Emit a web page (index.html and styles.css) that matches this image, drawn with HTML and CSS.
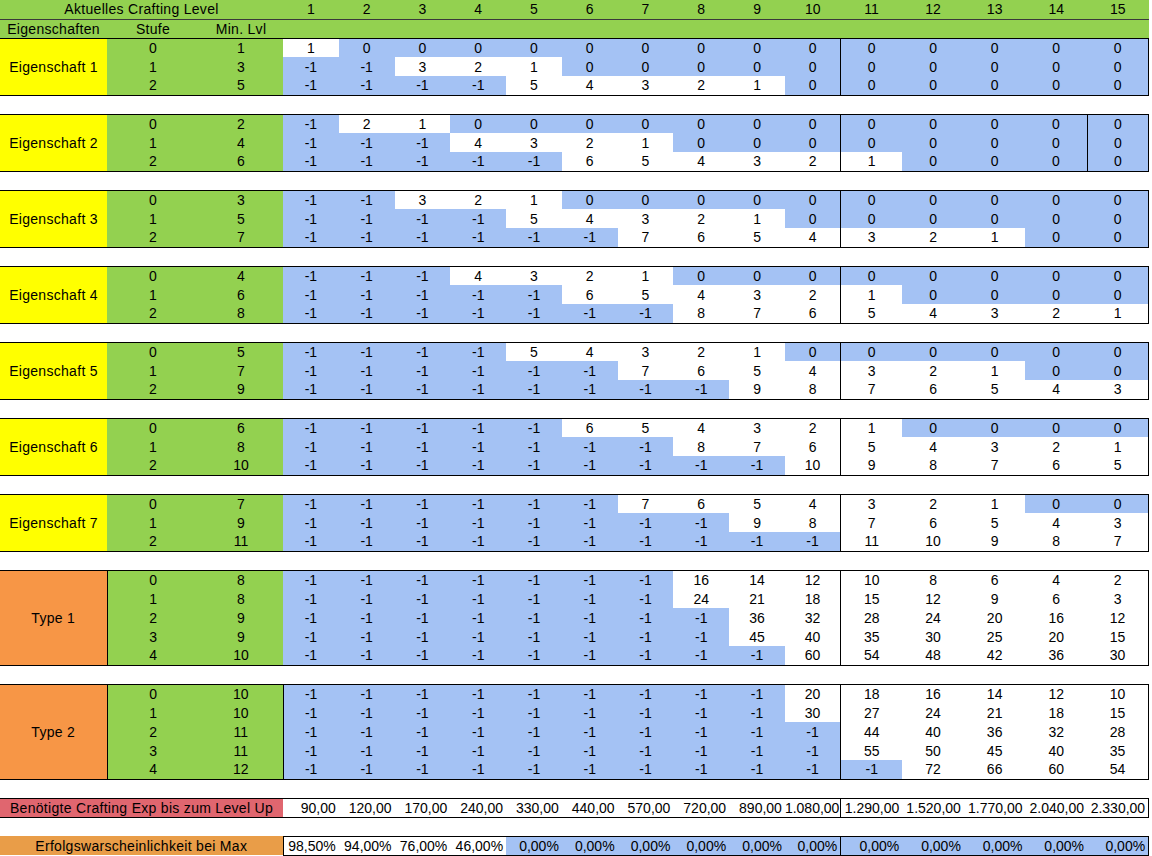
FILE: index.html
```html
<!DOCTYPE html>
<html lang="de">
<head>
<meta charset="utf-8">
<title>Crafting Level</title>
<link rel="stylesheet" href="styles.css">
</head>
<body>
<table class="sheet">
<colgroup>
<col class="ca"><col class="cb"><col class="cc">
<col class="cd"><col class="cd"><col class="cd"><col class="cd"><col class="cd"><col class="cd"><col class="cd"><col class="cd"><col class="cd"><col class="cd">
<col class="ce"><col class="ce"><col class="ce"><col class="ce"><col class="ce">
</colgroup>
<tbody class="head">
<tr class="h1"><td colspan="3" class="lbl">Aktuelles Crafting Level</td><td>1</td><td>2</td><td>3</td><td>4</td><td>5</td><td>6</td><td>7</td><td>8</td><td>9</td><td>10</td><td>11</td><td>12</td><td>13</td><td>14</td><td>15</td></tr>
<tr class="h2"><td class="lbl">Eigenschaften</td><td class="lbl">Stufe</td><td class="lbl">Min. Lvl</td><td></td><td></td><td></td><td></td><td></td><td></td><td></td><td></td><td></td><td></td><td></td><td></td><td></td><td></td><td></td></tr>
</tbody>

<tbody class="blk eig">
<tr><td rowspan="3" class="name">Eigenschaft 1</td><td class="g">0</td><td class="g">1</td><td>1</td><td class="b">0</td><td class="b">0</td><td class="b">0</td><td class="b">0</td><td class="b">0</td><td class="b">0</td><td class="b">0</td><td class="b">0</td><td class="b">0</td><td class="b">0</td><td class="b">0</td><td class="b">0</td><td class="b">0</td><td class="b">0</td></tr>
<tr><td class="g">1</td><td class="g">3</td><td class="b">-1</td><td class="b">-1</td><td>3</td><td>2</td><td>1</td><td class="b">0</td><td class="b">0</td><td class="b">0</td><td class="b">0</td><td class="b">0</td><td class="b">0</td><td class="b">0</td><td class="b">0</td><td class="b">0</td><td class="b">0</td></tr>
<tr><td class="g">2</td><td class="g">5</td><td class="b">-1</td><td class="b">-1</td><td class="b">-1</td><td class="b">-1</td><td>5</td><td>4</td><td>3</td><td>2</td><td>1</td><td class="b">0</td><td class="b">0</td><td class="b">0</td><td class="b">0</td><td class="b">0</td><td class="b">0</td></tr>
</tbody>
<tbody class="gap"><tr><td colspan="18"></td></tr></tbody>

<tbody class="blk eig e2">
<tr><td rowspan="3" class="name">Eigenschaft 2</td><td class="g">0</td><td class="g">2</td><td class="b">-1</td><td>2</td><td>1</td><td class="b">0</td><td class="b">0</td><td class="b">0</td><td class="b">0</td><td class="b">0</td><td class="b">0</td><td class="b">0</td><td class="b">0</td><td class="b">0</td><td class="b">0</td><td class="b">0</td><td class="b">0</td></tr>
<tr><td class="g">1</td><td class="g">4</td><td class="b">-1</td><td class="b">-1</td><td class="b">-1</td><td>4</td><td>3</td><td>2</td><td>1</td><td class="b">0</td><td class="b">0</td><td class="b">0</td><td class="b">0</td><td class="b">0</td><td class="b">0</td><td class="b">0</td><td class="b">0</td></tr>
<tr><td class="g">2</td><td class="g">6</td><td class="b">-1</td><td class="b">-1</td><td class="b">-1</td><td class="b">-1</td><td class="b">-1</td><td>6</td><td>5</td><td>4</td><td>3</td><td>2</td><td>1</td><td class="b">0</td><td class="b">0</td><td class="b">0</td><td class="b">0</td></tr>
</tbody>
<tbody class="gap"><tr><td colspan="18"></td></tr></tbody>

<tbody class="blk eig">
<tr><td rowspan="3" class="name">Eigenschaft 3</td><td class="g">0</td><td class="g">3</td><td class="b">-1</td><td class="b">-1</td><td>3</td><td>2</td><td>1</td><td class="b">0</td><td class="b">0</td><td class="b">0</td><td class="b">0</td><td class="b">0</td><td class="b">0</td><td class="b">0</td><td class="b">0</td><td class="b">0</td><td class="b">0</td></tr>
<tr><td class="g">1</td><td class="g">5</td><td class="b">-1</td><td class="b">-1</td><td class="b">-1</td><td class="b">-1</td><td>5</td><td>4</td><td>3</td><td>2</td><td>1</td><td class="b">0</td><td class="b">0</td><td class="b">0</td><td class="b">0</td><td class="b">0</td><td class="b">0</td></tr>
<tr><td class="g">2</td><td class="g">7</td><td class="b">-1</td><td class="b">-1</td><td class="b">-1</td><td class="b">-1</td><td class="b">-1</td><td class="b">-1</td><td>7</td><td>6</td><td>5</td><td>4</td><td>3</td><td>2</td><td>1</td><td class="b">0</td><td class="b">0</td></tr>
</tbody>
<tbody class="gap"><tr><td colspan="18"></td></tr></tbody>

<tbody class="blk eig">
<tr><td rowspan="3" class="name">Eigenschaft 4</td><td class="g">0</td><td class="g">4</td><td class="b">-1</td><td class="b">-1</td><td class="b">-1</td><td>4</td><td>3</td><td>2</td><td>1</td><td class="b">0</td><td class="b">0</td><td class="b">0</td><td class="b">0</td><td class="b">0</td><td class="b">0</td><td class="b">0</td><td class="b">0</td></tr>
<tr><td class="g">1</td><td class="g">6</td><td class="b">-1</td><td class="b">-1</td><td class="b">-1</td><td class="b">-1</td><td class="b">-1</td><td>6</td><td>5</td><td>4</td><td>3</td><td>2</td><td>1</td><td class="b">0</td><td class="b">0</td><td class="b">0</td><td class="b">0</td></tr>
<tr><td class="g">2</td><td class="g">8</td><td class="b">-1</td><td class="b">-1</td><td class="b">-1</td><td class="b">-1</td><td class="b">-1</td><td class="b">-1</td><td class="b">-1</td><td>8</td><td>7</td><td>6</td><td>5</td><td>4</td><td>3</td><td>2</td><td>1</td></tr>
</tbody>
<tbody class="gap"><tr><td colspan="18"></td></tr></tbody>

<tbody class="blk eig">
<tr><td rowspan="3" class="name">Eigenschaft 5</td><td class="g">0</td><td class="g">5</td><td class="b">-1</td><td class="b">-1</td><td class="b">-1</td><td class="b">-1</td><td>5</td><td>4</td><td>3</td><td>2</td><td>1</td><td class="b">0</td><td class="b">0</td><td class="b">0</td><td class="b">0</td><td class="b">0</td><td class="b">0</td></tr>
<tr><td class="g">1</td><td class="g">7</td><td class="b">-1</td><td class="b">-1</td><td class="b">-1</td><td class="b">-1</td><td class="b">-1</td><td class="b">-1</td><td>7</td><td>6</td><td>5</td><td>4</td><td>3</td><td>2</td><td>1</td><td class="b">0</td><td class="b">0</td></tr>
<tr><td class="g">2</td><td class="g">9</td><td class="b">-1</td><td class="b">-1</td><td class="b">-1</td><td class="b">-1</td><td class="b">-1</td><td class="b">-1</td><td class="b">-1</td><td class="b">-1</td><td>9</td><td>8</td><td>7</td><td>6</td><td>5</td><td>4</td><td>3</td></tr>
</tbody>
<tbody class="gap"><tr><td colspan="18"></td></tr></tbody>

<tbody class="blk eig">
<tr><td rowspan="3" class="name">Eigenschaft 6</td><td class="g">0</td><td class="g">6</td><td class="b">-1</td><td class="b">-1</td><td class="b">-1</td><td class="b">-1</td><td class="b">-1</td><td>6</td><td>5</td><td>4</td><td>3</td><td>2</td><td>1</td><td class="b">0</td><td class="b">0</td><td class="b">0</td><td class="b">0</td></tr>
<tr><td class="g">1</td><td class="g">8</td><td class="b">-1</td><td class="b">-1</td><td class="b">-1</td><td class="b">-1</td><td class="b">-1</td><td class="b">-1</td><td class="b">-1</td><td>8</td><td>7</td><td>6</td><td>5</td><td>4</td><td>3</td><td>2</td><td>1</td></tr>
<tr><td class="g">2</td><td class="g">10</td><td class="b">-1</td><td class="b">-1</td><td class="b">-1</td><td class="b">-1</td><td class="b">-1</td><td class="b">-1</td><td class="b">-1</td><td class="b">-1</td><td class="b">-1</td><td>10</td><td>9</td><td>8</td><td>7</td><td>6</td><td>5</td></tr>
</tbody>
<tbody class="gap"><tr><td colspan="18"></td></tr></tbody>

<tbody class="blk eig">
<tr><td rowspan="3" class="name">Eigenschaft 7</td><td class="g">0</td><td class="g">7</td><td class="b">-1</td><td class="b">-1</td><td class="b">-1</td><td class="b">-1</td><td class="b">-1</td><td class="b">-1</td><td>7</td><td>6</td><td>5</td><td>4</td><td>3</td><td>2</td><td>1</td><td class="b">0</td><td class="b">0</td></tr>
<tr><td class="g">1</td><td class="g">9</td><td class="b">-1</td><td class="b">-1</td><td class="b">-1</td><td class="b">-1</td><td class="b">-1</td><td class="b">-1</td><td class="b">-1</td><td class="b">-1</td><td>9</td><td>8</td><td>7</td><td>6</td><td>5</td><td>4</td><td>3</td></tr>
<tr><td class="g">2</td><td class="g">11</td><td class="b">-1</td><td class="b">-1</td><td class="b">-1</td><td class="b">-1</td><td class="b">-1</td><td class="b">-1</td><td class="b">-1</td><td class="b">-1</td><td class="b">-1</td><td class="b">-1</td><td>11</td><td>10</td><td>9</td><td>8</td><td>7</td></tr>
</tbody>
<tbody class="gap"><tr><td colspan="18"></td></tr></tbody>

<tbody class="blk typ">
<tr><td rowspan="5" class="name">Type 1</td><td class="g">0</td><td class="g">8</td><td class="b">-1</td><td class="b">-1</td><td class="b">-1</td><td class="b">-1</td><td class="b">-1</td><td class="b">-1</td><td class="b">-1</td><td>16</td><td>14</td><td>12</td><td>10</td><td>8</td><td>6</td><td>4</td><td>2</td></tr>
<tr><td class="g">1</td><td class="g">8</td><td class="b">-1</td><td class="b">-1</td><td class="b">-1</td><td class="b">-1</td><td class="b">-1</td><td class="b">-1</td><td class="b">-1</td><td>24</td><td>21</td><td>18</td><td>15</td><td>12</td><td>9</td><td>6</td><td>3</td></tr>
<tr><td class="g">2</td><td class="g">9</td><td class="b">-1</td><td class="b">-1</td><td class="b">-1</td><td class="b">-1</td><td class="b">-1</td><td class="b">-1</td><td class="b">-1</td><td class="b">-1</td><td>36</td><td>32</td><td>28</td><td>24</td><td>20</td><td>16</td><td>12</td></tr>
<tr><td class="g">3</td><td class="g">9</td><td class="b">-1</td><td class="b">-1</td><td class="b">-1</td><td class="b">-1</td><td class="b">-1</td><td class="b">-1</td><td class="b">-1</td><td class="b">-1</td><td>45</td><td>40</td><td>35</td><td>30</td><td>25</td><td>20</td><td>15</td></tr>
<tr><td class="g">4</td><td class="g">10</td><td class="b">-1</td><td class="b">-1</td><td class="b">-1</td><td class="b">-1</td><td class="b">-1</td><td class="b">-1</td><td class="b">-1</td><td class="b">-1</td><td class="b">-1</td><td>60</td><td>54</td><td>48</td><td>42</td><td>36</td><td>30</td></tr>
</tbody>
<tbody class="gap"><tr><td colspan="18"></td></tr></tbody>

<tbody class="blk typ t2">
<tr><td rowspan="5" class="name">Type 2</td><td class="g">0</td><td class="g">10</td><td class="b">-1</td><td class="b">-1</td><td class="b">-1</td><td class="b">-1</td><td class="b">-1</td><td class="b">-1</td><td class="b">-1</td><td class="b">-1</td><td class="b">-1</td><td>20</td><td>18</td><td>16</td><td>14</td><td>12</td><td>10</td></tr>
<tr><td class="g">1</td><td class="g">10</td><td class="b">-1</td><td class="b">-1</td><td class="b">-1</td><td class="b">-1</td><td class="b">-1</td><td class="b">-1</td><td class="b">-1</td><td class="b">-1</td><td class="b">-1</td><td>30</td><td>27</td><td>24</td><td>21</td><td>18</td><td>15</td></tr>
<tr><td class="g">2</td><td class="g">11</td><td class="b">-1</td><td class="b">-1</td><td class="b">-1</td><td class="b">-1</td><td class="b">-1</td><td class="b">-1</td><td class="b">-1</td><td class="b">-1</td><td class="b">-1</td><td class="b">-1</td><td>44</td><td>40</td><td>36</td><td>32</td><td>28</td></tr>
<tr><td class="g">3</td><td class="g">11</td><td class="b">-1</td><td class="b">-1</td><td class="b">-1</td><td class="b">-1</td><td class="b">-1</td><td class="b">-1</td><td class="b">-1</td><td class="b">-1</td><td class="b">-1</td><td class="b">-1</td><td>55</td><td>50</td><td>45</td><td>40</td><td>35</td></tr>
<tr><td class="g">4</td><td class="g">12</td><td class="b">-1</td><td class="b">-1</td><td class="b">-1</td><td class="b">-1</td><td class="b">-1</td><td class="b">-1</td><td class="b">-1</td><td class="b">-1</td><td class="b">-1</td><td class="b">-1</td><td class="b">-1</td><td>72</td><td>66</td><td>60</td><td>54</td></tr>
</tbody>
<tbody class="gap"><tr><td colspan="18"></td></tr></tbody>

<tbody class="sum exp">
<tr><td colspan="3" class="lbl">Benötigte Crafting Exp bis zum Level Up</td><td>90,00</td><td>120,00</td><td>170,00</td><td>240,00</td><td>330,00</td><td>440,00</td><td>570,00</td><td>720,00</td><td>890,00</td><td>1.080,00</td><td>1.290,00</td><td>1.520,00</td><td>1.770,00</td><td>2.040,00</td><td>2.330,00</td></tr>
</tbody>
<tbody class="gap"><tr><td colspan="18"></td></tr></tbody>

<tbody class="sum prob">
<tr><td colspan="3" class="lbl">Erfolgswarscheinlichkeit bei Max</td><td>98,50%</td><td>94,00%</td><td>76,00%</td><td>46,00%</td><td class="b">0,00%</td><td class="b">0,00%</td><td class="b">0,00%</td><td class="b">0,00%</td><td class="b">0,00%</td><td class="b">0,00%</td><td class="b">0,00%</td><td class="b">0,00%</td><td class="b">0,00%</td><td class="b">0,00%</td><td class="b">0,00%</td></tr>
</tbody>
</table>
</body>
</html>
```

FILE: styles.css
```css
html, body {
  margin: 0;
  padding: 0;
  background: #ffffff;
}

.sheet {
  border-collapse: collapse;
  table-layout: fixed;
  width: 1149px;
  font-family: "Liberation Sans", Arial, sans-serif;
  font-size: 14px;
  color: #000000;
}

.ca { width: 107px; }
.cb { width: 92px; }
.cc { width: 84px; }
.cd { width: 55.77px; }
.ce { width: 61.6px; }

.sheet tr {
  height: 19px;
}

.sheet td {
  padding: 0;
  line-height: 16px;
  text-align: center;
  white-space: nowrap;
  overflow: hidden;
  vertical-align: middle;
}

.sheet .lbl,
.sheet .name {
  letter-spacing: 0.3px;
}

/* header */
.head td {
  background: #93d150;
}
.h1 td {
  border-bottom: 1px solid #3a3a3a;
}

/* blocks */
.blk tr:first-child td {
  border-top: 1px solid #000;
}
.blk tr:last-child td,
.blk td.name {
  border-bottom: 1px solid #000;
}
.blk td:nth-last-child(6),
.sum td:nth-last-child(6),
.blk td:last-child,
.sum td:last-child {
  border-right: 1px solid #000;
}
.e2 td:nth-last-child(2) {
  border-right: 1px solid #000;
}

.sheet td.g {
  background: #93d150;
}
.sheet td.b {
  background: #a4c2f4;
}

.eig td.name {
  background: #ffff00;
}
.typ td.name {
  background: #f79646;
  border-right: 1px solid #000;
}
.t2 td:nth-last-child(16) {
  border-right: 1px solid #000;
}

/* gap rows */
.gap td {
  border: none;
  background: #fff;
}

/* summary rows */
.sum td {
  border-top: 1px solid #000;
  border-bottom: 1px solid #000;
  text-align: right;
  padding-right: 3px;
}
.sum td.lbl {
  text-align: center;
  padding-right: 0;
}
.exp td.lbl {
  background: #e0666f;
}
.prob td.lbl {
  background: #e99d48;
  border-top: none;
  border-bottom: none;
  border-right: 1px solid #000;
}
```
